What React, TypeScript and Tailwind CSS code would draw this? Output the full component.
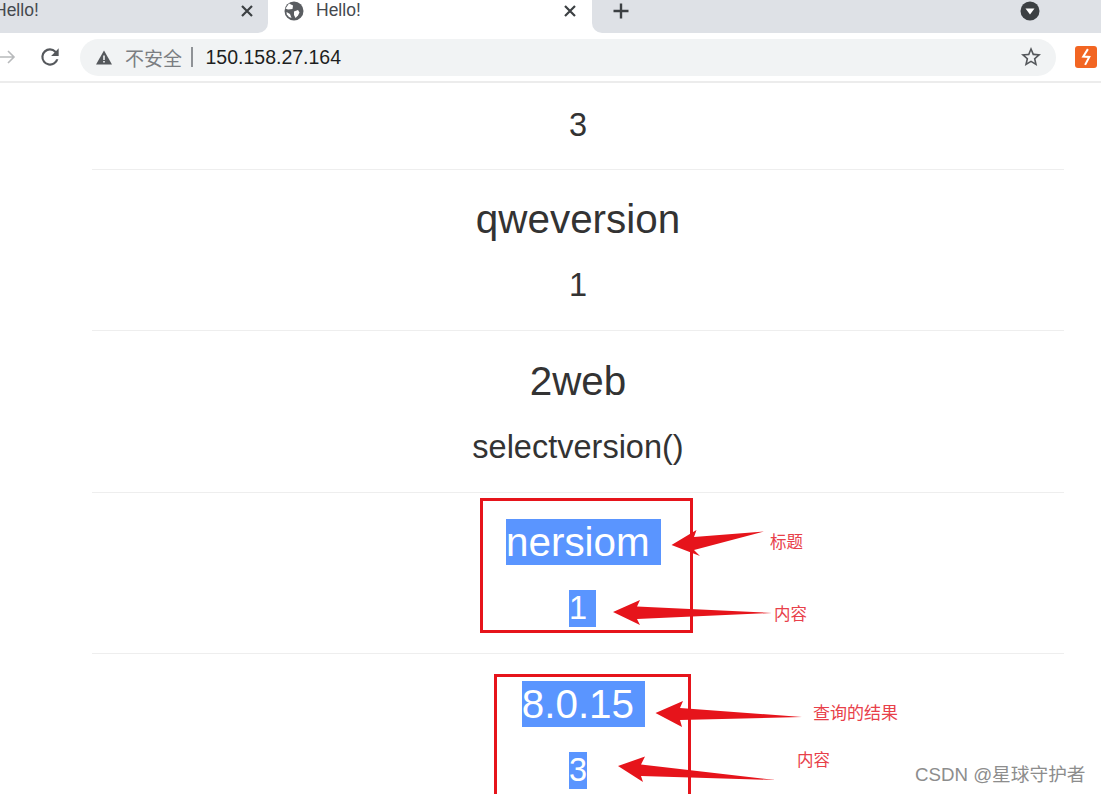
import React from 'react';

const SANS = 'font-["Liberation_Sans",Arial,sans-serif]';

const TabClose = () => (
  <svg viewBox="0 0 14 14" className="w-[14px] h-[14px] shrink-0">
    <path d="M2 2 12 12M12 2 2 12" stroke="#3c4043" strokeWidth="2.2" fill="none" />
  </svg>
);

const Globe = () => (
  <svg viewBox="0 0 20 20" className="w-[20px] h-[20px] shrink-0">
    <circle cx="10" cy="10" r="9.5" fill="#5a5d61" />
    <path d="M5 2.5 9 4.5 8.5 8 4 8.5 1.5 7.5Z" fill="#fff" />
    <path d="M10 10.5 14 9 15.5 11.5 14 14.5 11.5 17 10 14Z" fill="#fff" />
    <path d="M2.5 11 6 13 7.5 17 5 16 2.8 13.5Z" fill="#fff" />
  </svg>
);

const TabStrip = () => (
  <div className="flex h-[33px] bg-white">
    <div className="w-[268px] shrink-0 bg-[#dee1e6] rounded-br-[10px] flex items-center justify-between pr-[14px] pb-[12px] overflow-hidden">
      <span className="-ml-[6px] text-[17.5px] leading-[21px] text-[#45494e]">Hello!</span>
      <TabClose />
    </div>
    <div className="w-[324px] shrink-0 flex items-center pl-[16px] pr-[15px] pb-[12px]">
      <Globe />
      <span className="ml-[12px] text-[17.5px] leading-[21px] text-[#45494e]">Hello!</span>
      <span className="ml-auto"><TabClose /></span>
    </div>
    <div className="flex-1 bg-[#dee1e6] rounded-bl-[10px] flex items-center pl-[20px] pr-[61px] pb-[12px] justify-between">
      <svg viewBox="0 0 18 18" className="w-[18px] h-[18px]">
        <path d="M9 1.5v15M1.5 9h15" stroke="#3c4043" strokeWidth="2.4" fill="none" />
      </svg>
      <svg viewBox="0 0 20 20" className="w-[20px] h-[20px]">
        <circle cx="10" cy="10" r="9.5" fill="#3c4043" />
        <path d="M5.5 7.5h9L10 13.5z" fill="#fff" />
      </svg>
    </div>
  </div>
);

const Toolbar = () => (
  <div className="flex items-center h-[50px] bg-white border-b-2 border-[#ececec] relative">
    <svg viewBox="0 0 16 16" className="w-[16px] h-[16px] shrink-0">
      <path d="M0 8h14M8 2l6 6-6 6" stroke="#b8babc" strokeWidth="1.6" fill="none" />
    </svg>
    <svg viewBox="0 0 24 24" className="w-[26px] h-[26px] shrink-0 ml-[21px] mr-[17px]">
      <path
        fill="#55585c"
        d="M17.65 6.35A7.96 7.96 0 0 0 12 4a8 8 0 1 0 7.73 10h-2.08A6 6 0 1 1 12 6c1.66 0 3.14.69 4.22 1.78L13 11h7V4l-2.35 2.35z"
      />
    </svg>
    <div className="w-[976px] shrink-0 h-[37px] rounded-full bg-[#f1f3f4] flex items-center pl-[16px] pr-[13px]">
      <svg viewBox="0 0 16 15" className="w-[16px] h-[15px] shrink-0">
        <path d="M8 0.5 16 14.5H0z" fill="#55585c" />
        <path d="M7.2 5.5h1.6v4.6H7.2zM7.2 11h1.6v1.6H7.2z" fill="#f1f3f4" />
      </svg>
      <span className='ml-[13px] text-[19px] leading-none text-[#7b7e82] font-["Noto_Sans_CJK_SC",sans-serif]'>不安全</span>
      <span className="ml-[9px] w-[1.5px] h-[20px] bg-[#8f9296]" />
      <span className="ml-[13px] pt-[2px] text-[19.5px] text-[#1d1f22]">150.158.27.164</span>
      <svg viewBox="0 0 24 24" className="w-[24px] h-[24px] ml-auto">
        <path
          fill="#55585c"
          d="M22 9.24l-7.19-.62L12 2 9.19 8.63 2 9.24l5.46 4.73L5.82 21 12 17.27 18.18 21l-1.63-7.03L22 9.24zM12 15.4l-3.76 2.27 1-4.28-3.32-2.88 4.38-.38L12 6.1l1.71 4.04 4.38.38-3.32 2.88 1 4.28L12 15.4z"
        />
      </svg>
    </div>
    <div className="ml-[19px] w-[22px] h-[22px] shrink-0 rounded-[3px] bg-[#f26522] flex items-center justify-center">
      <svg viewBox="0 0 14 18" className="w-[13px] h-[18px]">
        <path d="M8.5 0.5 3.5 8.5 10 9 5.5 17.5" stroke="#fff" strokeWidth="2.2" fill="none" />
      </svg>
    </div>
  </div>
);

const Row = ({ title, body }: { title?: React.ReactNode; body: React.ReactNode }) => (
  <div className="h-[161.5px] shrink-0 border-b border-[#eeeeee] flex flex-col items-center">
    {title && <div className="h-[46px] mt-[26.5px] flex items-center text-[40.4px] leading-[46px]">{title}</div>}
    <div className="h-[37px] mt-[25px] flex items-center text-[32.5px] leading-[37px]">{body}</div>
  </div>
);

const Sel = ({ className, children }: { className?: string; children: React.ReactNode }) => (
  <span className={'bg-[#5a95ff] text-white whitespace-pre ' + (className ?? '')}>{children}</span>
);

const Label = ({ className, children }: { className: string; children: React.ReactNode }) => (
  <span className={'absolute text-[#e8404a] leading-none font-["Noto_Sans_CJK_SC",serif] ' + className}>
    {children}
  </span>
);

export default function App() {
  return (
    <div className={`relative w-[1101px] h-[794px] overflow-hidden bg-white ${SANS}`}>
      <TabStrip />
      <Toolbar />

      <div className="ml-[92px] w-[972px] text-[#333333] flex flex-col -mt-[1px]">
        <div className="h-[87.75px] shrink-0 border-b border-[#eeeeee] flex justify-center pt-[25px] text-[32.5px] leading-[37px]">3</div>
        <Row title="qweversion" body="1" />
        <Row title="2web" body="selectversion()" />
        {/* the selected trailing space hangs past the centred text */}
        <Row title={<Sel className="ml-[11px]">nersiom </Sel>} body={<Sel className="ml-[9px]">1 </Sel>} />
        <Row title={<Sel className="ml-[11px]">8.0.15 </Sel>} body={<Sel>3</Sel>} />
      </div>

      {/* red annotations drawn over the page */}
      <div className="absolute left-[480px] top-[498px] w-[213px] h-[135px] border-[3px] border-[#e6141b]" />
      <div className="absolute left-[494px] top-[674px] w-[197px] h-[140px] border-[3px] border-[#e6141b]" />
      <svg viewBox="0 0 1101 794" className="absolute left-0 top-0 w-[1101px] h-[794px] pointer-events-none">
        <g fill="#e6141b">
          <polygon points="671.5,545 696.5,530 694,537 764,531.5 694,550 700,556" />
          <polygon points="613,612 640,600 637,606.5 772,613 637,619 640,625" />
          <polygon points="655.5,713 683,701 680,708 802,717 680,720 682,727" />
          <polygon points="618,766 645,756.5 641,764.5 775.5,780 641,776 643,782" />
        </g>
      </svg>
      <Label className="left-[770px] top-[533px] text-[16.5px]">标题</Label>
      <Label className="left-[774px] top-[605px] text-[16.5px]">内容</Label>
      <Label className="left-[813px] top-[703px] text-[17px]">查询的结果</Label>
      <Label className="left-[797px] top-[751px] text-[16.5px]">内容</Label>
      <span className='absolute left-[915px] top-[763px] text-[18.7px] leading-[24px] text-[#8d8d8d] whitespace-nowrap font-["Liberation_Sans","Noto_Sans_CJK_SC",sans-serif]'>
        CSDN @星球守护者
      </span>
    </div>
  );
}
